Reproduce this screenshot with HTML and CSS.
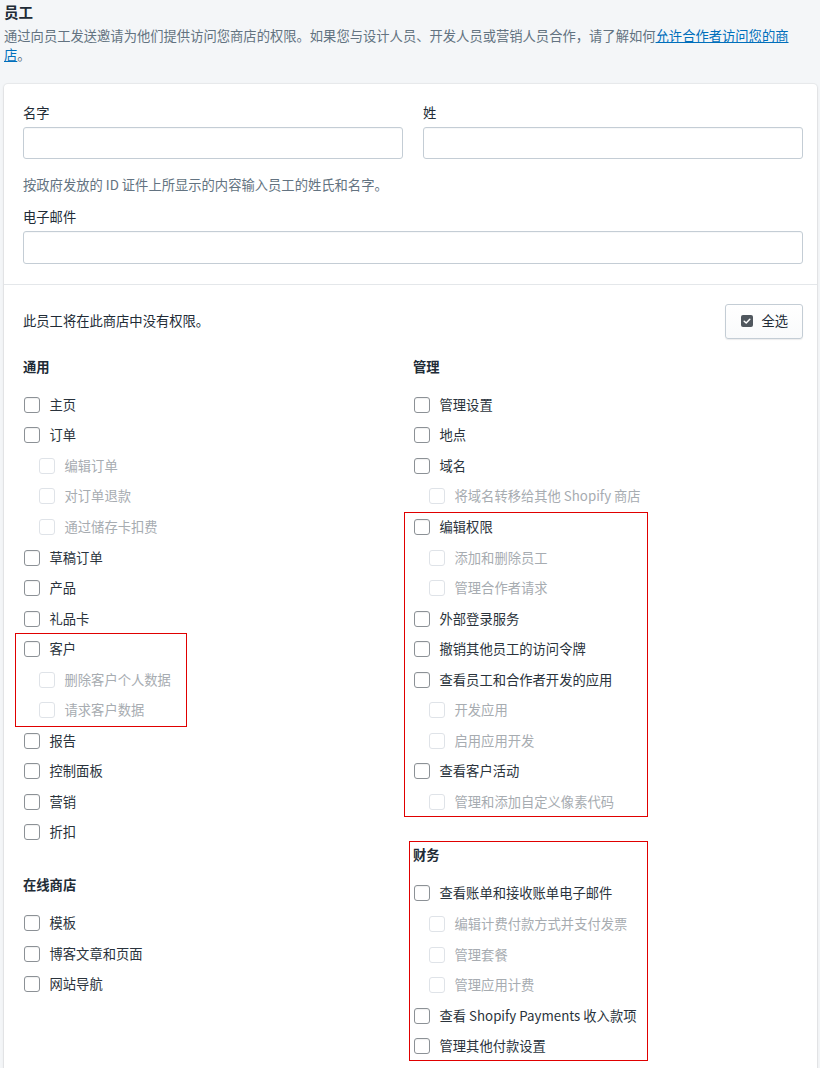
FILE: index.html
```html
<!DOCTYPE html>
<html lang="zh-CN">
<head>
<meta charset="utf-8">
<title>员工</title>
<link rel="stylesheet" href="styles.css">
</head>
<body>
<header class="page-head">
  <h1 class="title">员工</h1>
  <p class="desc">通过向员工发送邀请为他们提供访问您商店的权限。如果您与设计人员、开发人员或营销人员合作，请了解如何<a href="#">允许合作者访问您的商店</a>。</p>
</header>

<div class="card">
  <section class="card-section form">
    <div class="name-row">
      <div class="field">
        <label class="label">名字</label>
        <div class="input"></div>
      </div>
      <div class="field">
        <label class="label">姓</label>
        <div class="input"></div>
      </div>
    </div>
    <p class="help">按政府发放的 ID 证件上所显示的内容输入员工的姓氏和名字。</p>
    <div class="field email">
      <label class="label">电子邮件</label>
      <div class="input"></div>
    </div>
  </section>

  <section class="card-section perms">
    <div class="perm-top">
      <span>此员工将在此商店中没有权限。</span>
      <button class="btn" type="button">
        <svg class="btn-icon" width="12" height="12" viewBox="0 0 12 12" aria-hidden="true"><rect x="0" y="0" width="12" height="12" rx="2" fill="#50575e"/><path d="M3.2 6.2 L5.2 8 L8.8 4.2" fill="none" stroke="#fff" stroke-width="1.5" stroke-linecap="round" stroke-linejoin="round"/></svg>
        <span>全选</span>
      </button>
    </div>

    <div class="cols">
      <div class="col">
        <h3 class="group-title">通用</h3>
        <div class="item"><span class="cb"></span>主页</div>
        <div class="item"><span class="cb"></span>订单</div>
        <div class="item sub"><span class="cb"></span>编辑订单</div>
        <div class="item sub"><span class="cb"></span>对订单退款</div>
        <div class="item sub"><span class="cb"></span>通过储存卡扣费</div>
        <div class="item"><span class="cb"></span>草稿订单</div>
        <div class="item"><span class="cb"></span>产品</div>
        <div class="item"><span class="cb"></span>礼品卡</div>
        <div class="hl hl-customers">
          <div class="item"><span class="cb"></span>客户</div>
          <div class="item sub"><span class="cb"></span>删除客户个人数据</div>
          <div class="item sub"><span class="cb"></span>请求客户数据</div>
        </div>
        <div class="item"><span class="cb"></span>报告</div>
        <div class="item"><span class="cb"></span>控制面板</div>
        <div class="item"><span class="cb"></span>营销</div>
        <div class="item"><span class="cb"></span>折扣</div>

        <h3 class="group-title next">在线商店</h3>
        <div class="item"><span class="cb"></span>模板</div>
        <div class="item"><span class="cb"></span>博客文章和页面</div>
        <div class="item"><span class="cb"></span>网站导航</div>
      </div>

      <div class="col">
        <h3 class="group-title">管理</h3>
        <div class="item"><span class="cb"></span>管理设置</div>
        <div class="item"><span class="cb"></span>地点</div>
        <div class="item"><span class="cb"></span>域名</div>
        <div class="item sub"><span class="cb"></span>将域名转移给其他 Shopify 商店</div>
        <div class="hl hl-admin">
          <div class="item"><span class="cb"></span>编辑权限</div>
          <div class="item sub"><span class="cb"></span>添加和删除员工</div>
          <div class="item sub"><span class="cb"></span>管理合作者请求</div>
          <div class="item"><span class="cb"></span>外部登录服务</div>
          <div class="item"><span class="cb"></span>撤销其他员工的访问令牌</div>
          <div class="item"><span class="cb"></span>查看员工和合作者开发的应用</div>
          <div class="item sub"><span class="cb"></span>开发应用</div>
          <div class="item sub"><span class="cb"></span>启用应用开发</div>
          <div class="item"><span class="cb"></span>查看客户活动</div>
          <div class="item sub"><span class="cb"></span>管理和添加自定义像素代码</div>
        </div>
        <div class="hl hl-finance">
          <h3 class="group-title">财务</h3>
          <div class="item"><span class="cb"></span>查看账单和接收账单电子邮件</div>
          <div class="item sub"><span class="cb"></span>编辑计费付款方式并支付发票</div>
          <div class="item sub"><span class="cb"></span>管理套餐</div>
          <div class="item sub"><span class="cb"></span>管理应用计费</div>
          <div class="item"><span class="cb"></span>查看 Shopify Payments 收入款项</div>
          <div class="item"><span class="cb"></span>管理其他付款设置</div>
        </div>
      </div>
    </div>
  </section>
</div>
</body>
</html>
```

FILE: styles.css
```css
html {
  overflow-x: hidden;
}

body {
  margin: 0;
  background: #f4f6f8;
  color: #212b36;
  font-family: "Noto Sans CJK SC", "Noto Sans", sans-serif;
  font-size: 13.3px;
  line-height: 18px;
}

.page-head {
  padding: 2px 0 0 4px;
  max-width: 795px;
}

.title {
  margin: 0;
  font-size: 14.5px;
  line-height: 20px;
  font-weight: 700;
  color: #212b36;
}

.desc {
  margin: 3.5px 0 0;
  line-height: 19.5px;
  color: #637381;
}

.desc a {
  color: #006fbb;
  text-decoration: underline;
}

.card {
  margin: 19px 3px 0 4px;
  background: #fff;
  border-radius: 4px 4px 0 0;
  box-shadow: 0 0 0 1px rgba(63, 63, 68, 0.05), 0 1px 3px 0 rgba(63, 63, 68, 0.12);
}

.card-section {
  padding: 20px 14px 20px 19px;
}

.card-section + .card-section {
  border-top: 1px solid #e4e7ea;
}

.name-row {
  display: grid;
  grid-template-columns: 1fr 1fr;
  column-gap: 20px;
}

.field {
  display: flex;
  flex-direction: column;
}

.label {
  display: block;
  margin-bottom: 5px;
  color: #212b36;
}

.input {
  height: 32px;
  box-sizing: border-box;
  border: 1px solid #c4cdd5;
  border-radius: 3px;
  background: #fff;
  box-shadow: inset 0 1px 0 0 rgba(99, 115, 129, 0.05);
}

.email .input {
  height: 33px;
}

.help {
  margin: 17px 0 14px;
  color: #637381;
}

.perms {
  padding-top: 19px;
}

.perm-top {
  display: flex;
  align-items: center;
  justify-content: space-between;
}

.btn {
  display: inline-flex;
  align-items: center;
  gap: 8px;
  height: 35px;
  box-sizing: border-box;
  padding: 0 14px 0 15px;
  border: 1px solid #c4cdd5;
  border-radius: 3px;
  background: linear-gradient(#fff, #f9fafb);
  box-shadow: 0 1px 1px 0 rgba(22, 29, 37, 0.08);
  font: inherit;
  color: #212b36;
}

.btn-icon {
  display: block;
}

.cols {
  display: grid;
  grid-template-columns: 390px 390px;
  margin-top: 19px;
}

.col {
  display: flex;
  flex-direction: column;
}

.group-title {
  margin: 0 0 14px;
  font-size: 13.3px;
  line-height: 18px;
  font-weight: 600;
  color: #212b36;
}

.group-title.next {
  margin-top: 28px;
}

.item {
  display: flex;
  align-items: center;
  height: 30.55px;
  gap: 9.5px;
  padding-left: 1px;
  color: #2a333c;
  white-space: nowrap;
}

.cb {
  flex: none;
  width: 16px;
  height: 16px;
  box-sizing: border-box;
  border: 1px solid #8c9196;
  border-radius: 3px;
  background: #fff;
  box-shadow: inset 0 1px 1px rgba(0, 0, 0, 0.06);
}

.item.sub {
  padding-left: 16px;
  color: #a7acb1;
}

.item.sub .cb {
  border-color: #dfe3e8;
  box-shadow: none;
}

.hl {
  outline: 1px solid #e00000;
}

.hl-customers {
  margin-left: -7px;
  padding-left: 7px;
  width: 170px;
  box-sizing: border-box;
}

.hl-admin {
  margin-left: -9px;
  padding-left: 9px;
  width: 244px;
  box-sizing: border-box;
  outline-offset: -1px;
}

.hl-finance {
  margin-top: 24px;
  margin-left: -4px;
  padding: 5px 0 0 4px;
  width: 239px;
  box-sizing: border-box;
  outline-offset: -1px;
}
```
